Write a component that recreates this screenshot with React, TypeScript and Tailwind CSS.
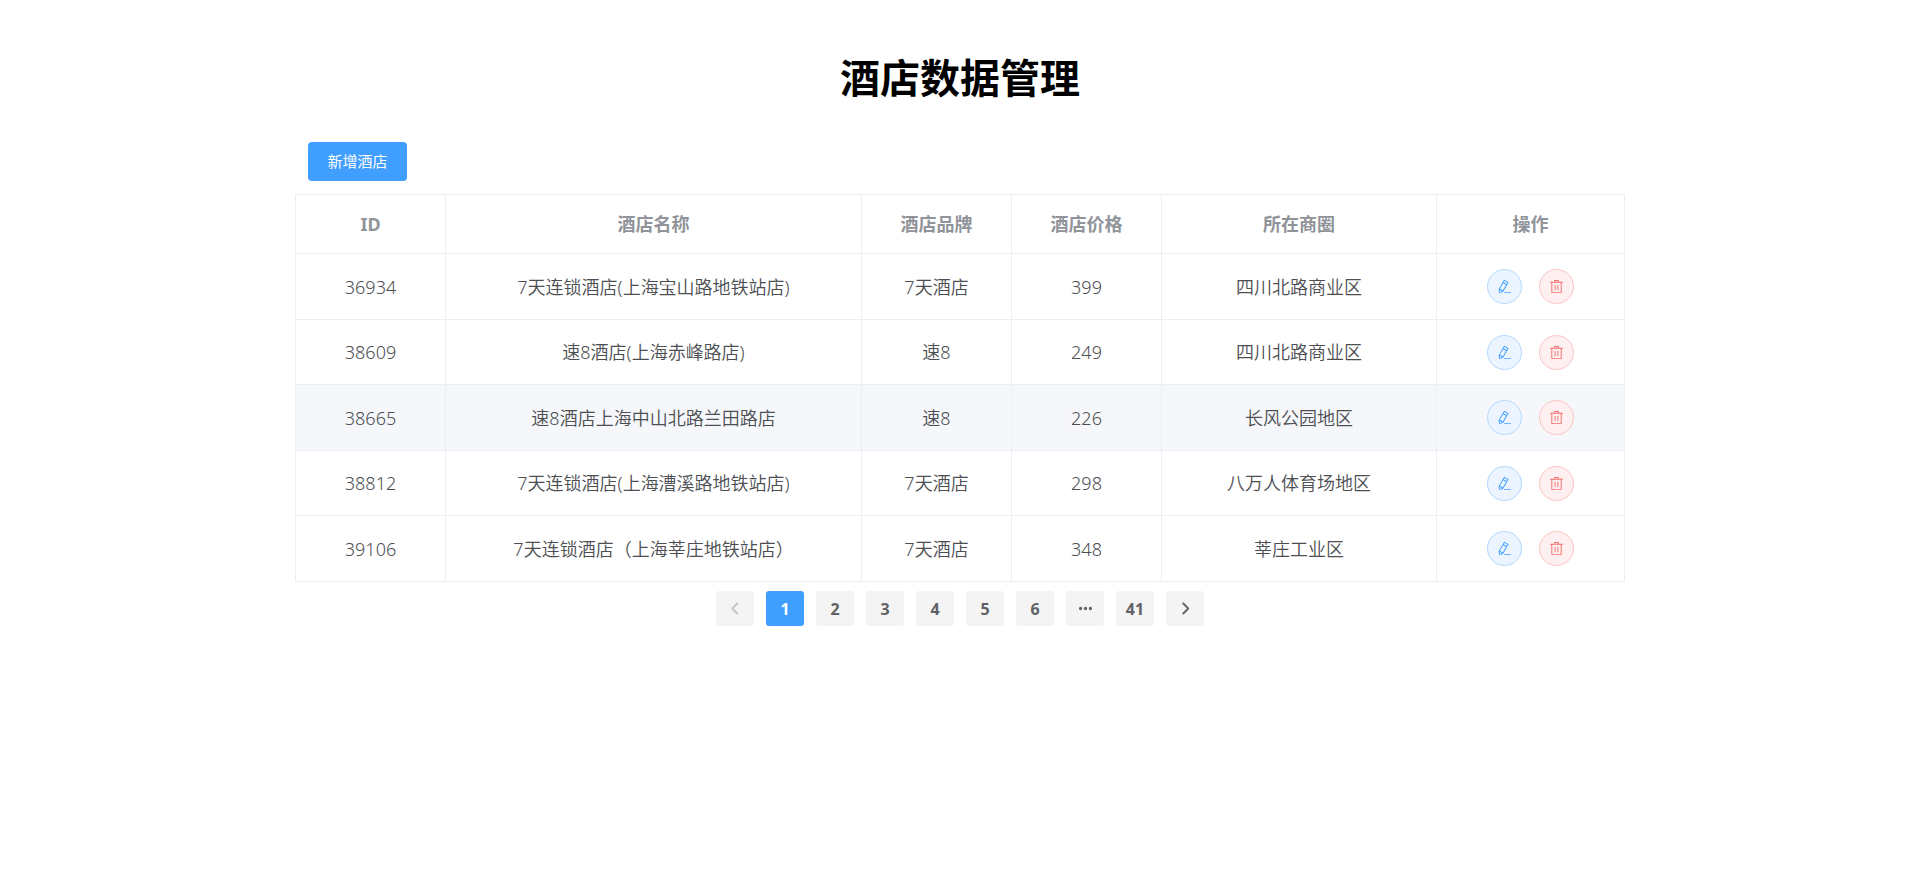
import React, { useState } from 'react';

interface Hotel {
  id: number;
  name: string;
  brand: string;
  price: number;
  business: string;
}

const HOTELS: Hotel[] = [
  { id: 36934, name: '7天连锁酒店(上海宝山路地铁站店)', brand: '7天酒店', price: 399, business: '四川北路商业区' },
  { id: 38609, name: '速8酒店(上海赤峰路店)', brand: '速8', price: 249, business: '四川北路商业区' },
  { id: 38665, name: '速8酒店上海中山北路兰田路店', brand: '速8', price: 226, business: '长风公园地区' },
  { id: 38812, name: '7天连锁酒店(上海漕溪路地铁站店)', brand: '7天酒店', price: 298, business: '八万人体育场地区' },
  { id: 39106, name: '7天连锁酒店（上海莘庄地铁站店）', brand: '7天酒店', price: 348, business: '莘庄工业区' },
];

const COLUMNS = [
  { label: 'ID', width: 'w-[150px]' },
  { label: '酒店名称', width: '' },
  { label: '酒店品牌', width: 'w-[150px]' },
  { label: '酒店价格', width: 'w-[150px]' },
  { label: '所在商圈', width: 'w-[275px]' },
  { label: '操作', width: 'w-[188px]' },
];

const PAGES = [1, 2, 3, 4, 5, 6];
const LAST_PAGE = 41;

const ICONS = {
  edit: 'm199.04 672.64 193.984 112 224-387.968-193.92-112-224 388.032zm-23.872 60.16 32.896 148.288 144.896-45.696L175.168 732.8zM455.04 229.248l193.92 112 56.704-98.112-193.984-112-56.64 98.112zM104.32 708.8l384-665.024 304.768 175.936L409.152 884.8h.064l-248.448 78.336L104.32 708.8zm384 254.272v-64h448v64h-448z',
  trash: 'M160 256H96a32 32 0 0 1 0-64h256V95.936a32 32 0 0 1 32-32h256a32 32 0 0 1 32 32V192h256a32 32 0 1 1 0 64h-64v672a32 32 0 0 1-32 32H192a32 32 0 0 1-32-32V256zm448-64v-64H416v64h192zM224 896h576V256H224v640zm192-128a32 32 0 0 1-32-32V416a32 32 0 0 1 64 0v320a32 32 0 0 1-32 32zm192 0a32 32 0 0 1-32-32V416a32 32 0 0 1 64 0v320a32 32 0 0 1-32 32z',
  left: 'M609.408 149.376 277.76 489.6a32 32 0 0 0 0 44.672l331.648 340.352a29.12 29.12 0 0 0 41.728 0 30.592 30.592 0 0 0 0-42.752L339.264 511.936l311.872-319.872a30.592 30.592 0 0 0 0-42.688 29.12 29.12 0 0 0-41.728 0z',
  right: 'M340.864 149.312a30.592 30.592 0 0 0 0 42.752L652.736 512 340.864 831.872a30.592 30.592 0 0 0 0 42.752 29.12 29.12 0 0 0 41.728 0L714.24 534.336a32 32 0 0 0 0-44.672L382.592 149.376a29.12 29.12 0 0 0-41.728 0z',
  more: 'M176 400a112 112 0 1 1 0 224 112 112 0 0 1 0-224zm336 0a112 112 0 1 1 0 224 112 112 0 0 1 0-224zm336 0a112 112 0 1 1 0 224 112 112 0 0 1 0-224z',
};

const Icon: React.FC<{ name: keyof typeof ICONS; className?: string }> = ({ name, className }) => (
  <svg viewBox="0 0 1024 1024" fill="currentColor" className={className} aria-hidden="true">
    <path d={ICONS[name]} />
  </svg>
);

const cell = 'border-r border-b border-[#ebeef5] p-0';
const pagerBase = 'flex h-[35px] w-[38px] items-center justify-center rounded-[3px]';

export default function App() {
  const [page, setPage] = useState(1);
  const [activeId, setActiveId] = useState(38665);

  return (
    <main className="mx-auto max-w-[1330px] pt-12 font-['Noto_Sans','Noto_Sans_CJK_SC',sans-serif] text-[#606266]">
      <h1 className="text-center text-[40px] leading-[60px] font-bold text-black">酒店数据管理</h1>

      <div className="px-[13px] pt-[34px] pb-[13px]">
        <button type="button" className="block h-[39px] w-[99px] rounded bg-[#409eff] text-[15px] text-white">
          新增酒店
        </button>
      </div>

      <table className="w-full table-fixed border-separate border-spacing-0 border-t border-l border-[#ebeef5] text-center text-lg">
        <thead>
          <tr className="h-[59px] text-[#909399]">
            {COLUMNS.map(col => (
              <th key={col.label} className={`${cell} ${col.width} font-bold`}>
                {col.label}
              </th>
            ))}
          </tr>
        </thead>
        <tbody className="font-[350] text-[#4c4e52]">
          {HOTELS.map(hotel => (
            <tr
              key={hotel.id}
              onMouseEnter={() => setActiveId(hotel.id)}
              className={`odd:h-[66px] even:h-[65px] ${hotel.id === activeId ? 'bg-[#f5f7fa]' : ''}`}
            >
              <td className={cell}>{hotel.id}</td>
              <td className={cell}>{hotel.name}</td>
              <td className={cell}>{hotel.brand}</td>
              <td className={cell}>{hotel.price}</td>
              <td className={cell}>{hotel.business}</td>
              <td className={cell}>
                <div className="flex justify-center gap-[17px]">
                  <button
                    type="button"
                    aria-label="编辑"
                    className="flex size-[35px] items-center justify-center rounded-full border border-[#b3d8ff] bg-[#ecf5ff] text-[#409eff]"
                  >
                    <Icon name="edit" className="size-[15px]" />
                  </button>
                  <button
                    type="button"
                    aria-label="删除"
                    className="flex size-[35px] items-center justify-center rounded-full border border-[#fbc4c4] bg-[#fef0f0] text-[#f56c6c]"
                  >
                    <Icon name="trash" className="size-[15px]" />
                  </button>
                </div>
              </td>
            </tr>
          ))}
        </tbody>
      </table>

      <nav aria-label="分页" className="flex justify-center gap-3 pt-[9px] text-base font-bold">
        <button
          type="button"
          aria-label="上一页"
          disabled={page === 1}
          onClick={() => setPage(page - 1)}
          className={`${pagerBase} bg-[#f4f4f5] disabled:text-[#c0c4cc]`}
        >
          <Icon name="left" className="size-[15px] stroke-current stroke-[70]" />
        </button>
        {PAGES.map(n => (
          <button
            key={n}
            type="button"
            onClick={() => setPage(n)}
            className={`${pagerBase} ${n === page ? 'bg-[#409eff] text-white' : 'bg-[#f4f4f5]'}`}
          >
            {n}
          </button>
        ))}
        <button type="button" aria-label="更多" className={`${pagerBase} bg-[#f4f4f5]`}>
          <Icon name="more" className="size-[15px]" />
        </button>
        <button type="button" onClick={() => setPage(LAST_PAGE)} className={`${pagerBase} bg-[#f4f4f5]`}>
          {LAST_PAGE}
        </button>
        <button
          type="button"
          aria-label="下一页"
          disabled={page === LAST_PAGE}
          onClick={() => setPage(page + 1)}
          className={`${pagerBase} bg-[#f4f4f5] disabled:text-[#c0c4cc]`}
        >
          <Icon name="right" className="size-[15px] stroke-current stroke-[70]" />
        </button>
      </nav>
    </main>
  );
}
